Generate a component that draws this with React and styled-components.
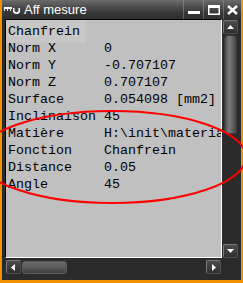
import React from 'react';
import styled, { createGlobalStyle } from 'styled-components';

const rows = [
  { label: 'Chanfrein', value: '', selected: true },
  { label: 'Norm X', value: '0' },
  { label: 'Norm Y', value: '-0.707107' },
  { label: 'Norm Z', value: '0.707107' },
  { label: 'Surface', value: '0.054098 [mm2]' },
  { label: 'Inclinaison', value: '45' },
  { label: 'Matière', value: 'H:\\init\\materiau' },
  { label: 'Fonction', value: 'Chanfrein' },
  { label: 'Distance', value: '0.05' },
  { label: 'Angle', value: '45' },
];

const Arrow = ({ dir }) => {
  const pts = {
    up: '1,6 4.5,2 8,6',
    down: '1,2 4.5,6 8,2',
    left: '6,1 2,4.5 6,8',
    right: '3,1 7,4.5 3,8',
  };
  return (
    <svg width="9" height="9" viewBox="0 0 9 9">
      <polygon points={pts[dir]} fill="#fff" />
    </svg>
  );
};

const App = () => {
  return (
    <>
      <GlobalStyle />
      <Screen>
        <Window>
          <TitleBar>
            <TitleIcon width="17" height="9" viewBox="0 0 17 9">
              <rect x="0" y="1" width="8" height="2" fill="#fff" />
              <rect x="0" y="3" width="1" height="2" fill="#ddd" />
              <rect x="3" y="3" width="1" height="2" fill="#ddd" />
              <rect x="6" y="3" width="1" height="2" fill="#ddd" />
              <path d="M9 2 L9 5 Q9 8 12.5 8 Q16 8 16 5 L16 2 L14.5 2 L14.5 5 L12.5 6.5 L10.5 5 L10.5 2 Z" fill="#fff" />
            </TitleIcon>
            <Title>Aff mesure</Title>
            <TitleButtons>
              <TitleButton>
                <svg width="12" height="10" viewBox="0 0 12 10">
                  <rect x="0" y="6" width="12" height="3" fill="#fff" />
                </svg>
              </TitleButton>
              <TitleButton>
                <svg width="12" height="10" viewBox="0 0 12 10">
                  <rect x="0.75" y="0.75" width="10.5" height="8.5" fill="none" stroke="#fff" strokeWidth="1.5" />
                  <rect x="0" y="0" width="12" height="3" fill="#fff" />
                </svg>
              </TitleButton>
              <TitleButton $last>
                <svg width="11" height="10" viewBox="0 0 11 10">
                  <path d="M1 1 L10 9 M10 1 L1 9" stroke="#fff" strokeWidth="2.4" />
                </svg>
              </TitleButton>
            </TitleButtons>
          </TitleBar>

          <Body>
            <List>
              {rows.map((r) => (
                <Row key={r.label}>
                  <Label $selected={r.selected}>{r.label}</Label>
                  <Value>{r.value}</Value>
                </Row>
              ))}
            </List>

            <VScroll>
              <ScrollButton>
                <Arrow dir="up" />
              </ScrollButton>
              <VThumb />
              <VTrack />
              <ScrollButton>
                <Arrow dir="down" />
              </ScrollButton>
            </VScroll>

            <HScroll>
              <ScrollButton>
                <Arrow dir="left" />
              </ScrollButton>
              <HThumb />
              <HTrack />
              <ScrollButton>
                <Arrow dir="right" />
              </ScrollButton>
            </HScroll>
            <Corner />
          </Body>
        </Window>

        <Annotation width="243" height="283" viewBox="0 0 243 283">
          <ellipse cx="112" cy="157" rx="134" ry="46" fill="none" stroke="#ff0000" strokeWidth="2" />
        </Annotation>
      </Screen>
    </>
  );
};

const GlobalStyle = createGlobalStyle`
  html, body {
    margin: 0;
    padding: 0;
    background: #2b2b2b;
  }
  #root {
    width: 243px;
    height: 283px;
  }
`;

const Screen = styled.div`
  position: relative;
  width: 243px;
  height: 283px;
  overflow: hidden;
`;

const Window = styled.div`
  width: 243px;
  height: 283px;
  box-sizing: border-box;
  border: 2px solid #f39200;
  border-top: none;
  border-bottom-width: 3px;
  background: #2b2b2b;
  display: flex;
  flex-direction: column;
`;

const TitleBar = styled.div`
  height: 19px;
  display: flex;
  align-items: center;
  background: linear-gradient(#6b6b6b 0%, #474747 45%, #353535 70%, #2f2f2f 100%);
  color: #fff;
`;

const TitleIcon = styled.svg`
  margin-left: 2px;
  margin-top: 1px;
  flex-shrink: 0;
`;

const Title = styled.span`
  margin-left: 3px;
  font-family: 'Liberation Sans', Arial, sans-serif;
  font-size: 13px;
  line-height: 19px;
  color: #ffffff;
  white-space: nowrap;
`;

const TitleButtons = styled.div`
  margin-left: auto;
  display: flex;
  height: 100%;
`;

const TitleButton = styled.div`
  width: ${(p) => (p.$last ? '18px' : '20px')};
  height: 100%;
  display: flex;
  align-items: center;
  justify-content: center;
  border-left: 1px solid rgba(160, 160, 160, 0.45);
  box-sizing: border-box;
`;

const Body = styled.div`
  display: grid;
  grid-template-columns: 217px 17px;
  grid-template-rows: 239px 18px;
  padding-left: 3px;
`;

const List = styled.div`
  background: #c0c0c0;
  border-top: 1px solid #000;
  border-left: 1px solid #000;
  border-right: 1px solid #fff;
  border-bottom: 1px solid #fff;
  overflow: hidden;
  font-family: 'Liberation Mono', 'Courier New', monospace;
  font-size: 13.33px;
  color: #000;
`;

const Row = styled.div`
  display: grid;
  grid-template-columns: 96px 1fr;
  height: 17px;
  line-height: 23px;
  padding-left: 2px;
  white-space: nowrap;
`;

const Label = styled.span`
  margin-left: -2px;
  padding-left: 2px;
  width: 78px;
  background: ${(p) => (p.$selected ? '#c7c7c7' : 'transparent')};
`;

const Value = styled.span`
  overflow: hidden;
`;

const VScroll = styled.div`
  display: flex;
  flex-direction: column;
  padding: 1px 1px 0 1px;
`;

const ScrollButton = styled.div`
  width: 15px;
  height: 14px;
  box-sizing: border-box;
  flex-shrink: 0;
  display: flex;
  align-items: center;
  justify-content: center;
  border: 1px solid #7a7a7a;
  border-right-color: #505050;
  border-bottom-color: #505050;
  border-radius: 2px;
  background: linear-gradient(#4c4c4c, #2f2f2f);
`;

const VThumb = styled.div`
  margin: 1px 1px 0 1px;
  height: 97px;
  border-radius: 4px 4px 2px 2px;
  border: 1px solid #3c3c3c;
  background: linear-gradient(90deg, #4a4a4a 0%, #7a7a7a 35%, #6a6a6a 60%, #454545 100%);
`;

const VTrack = styled.div`
  flex: 1;
`;

const HScroll = styled.div`
  display: flex;
  align-items: center;
  padding: 2px 1px 0 1px;
  height: 14px;
  align-self: start;
`;

const HThumb = styled.div`
  margin-left: 1px;
  width: 45px;
  height: 13px;
  box-sizing: border-box;
  border-radius: 3px;
  border: 1px solid #5e5e5e;
  background: linear-gradient(#6a6a6a 0%, #5a5a5a 50%, #3e3e3e 100%);
`;

const HTrack = styled.div`
  flex: 1;
`;

const Corner = styled.div``;

const Annotation = styled.svg`
  position: absolute;
  left: 0;
  top: 0;
  pointer-events: none;
`;

export default App;
